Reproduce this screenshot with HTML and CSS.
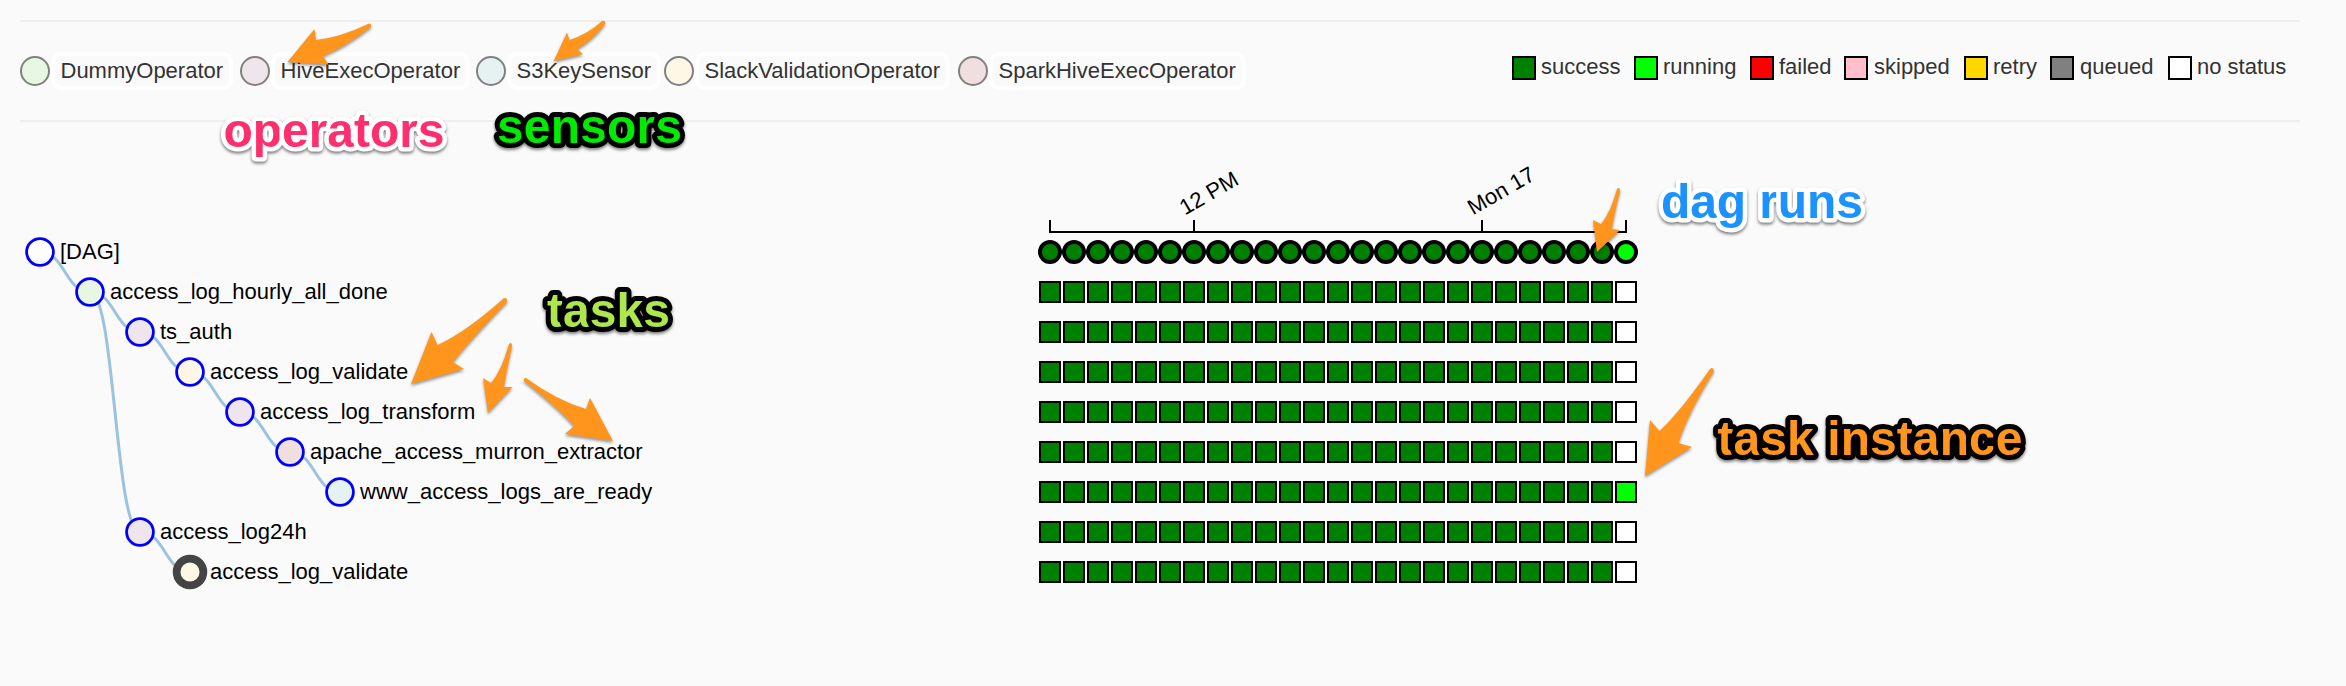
FILE: index.html
```html
<!DOCTYPE html>
<html lang="en">
<head>
<meta charset="utf-8">
<title>DAG tree view</title>
<link rel="stylesheet" href="styles.css">
</head>
<body>
<header class="legend">
  <ul class="operators">
    <li><i class="dot dummy"></i><span>DummyOperator</span></li>
    <li><i class="dot hive"></i><span>HiveExecOperator</span></li>
    <li><i class="dot s3"></i><span>S3KeySensor</span></li>
    <li><i class="dot slack"></i><span>SlackValidationOperator</span></li>
    <li><i class="dot spark"></i><span>SparkHiveExecOperator</span></li>
  </ul>
  <ul class="states">
    <li><i class="box success"></i>success</li>
    <li><i class="box running"></i>running</li>
    <li><i class="box failed"></i>failed</li>
    <li><i class="box skipped"></i>skipped</li>
    <li><i class="box retry"></i>retry</li>
    <li><i class="box queued"></i>queued</li>
    <li><i class="box none"></i>no status</li>
  </ul>
</header>
<svg class="tree" width="2346" height="564" viewBox="0 122 2346 564">
  <g id="links" class="links"></g>
  <g id="nodes" class="nodes"></g>
  <path class="axis" d="M1050 220V232H1626V220M1194 220V232M1482 220V232"/>
  <text class="tick" transform="translate(1185 215.500) rotate(-30)">12 PM</text>
  <text class="tick" transform="translate(1473 215.500) rotate(-30)">Mon 17</text>
  <g id="runs"></g>
</svg>
<svg class="notes" width="2346" height="686" viewBox="0 0 2346 686">
  <g class="arrows">
    <path d="M287.500 62L314.500 29L316 40Q341 37 368 24Q372 23 371 27Q345 47 323 56L328.500 64.500Z"/>
    <path d="M553.700 61L567 32.500L569.500 40Q588 34 602 21Q606 20 605 24Q593 40 577 49L583 54Z"/>
    <path d="M411 384L431.500 332L437.500 345Q466 332 504 298Q508 298 507 302Q474 336 453 362L464 369Z"/>
    <path d="M488 413L483 378L491 383Q502 370 509 344Q512 341 512 346Q506 374 504 387L512.500 387Z"/>
    <path d="M613 441L590 398L586 409Q556 400 526 378Q523 378 524 381Q558 408 574 426L565 434Z"/>
    <path d="M1597 252L1593 220L1601 224Q1611 212 1617 189Q1620 186 1620 191Q1614 215 1612 229L1620 230Z"/>
    <path d="M1645 476L1650 420L1659.500 431Q1680 412 1710 369Q1713 366 1714 371Q1688 413 1678.500 443L1692 447Z"/>
  </g>
  <text class="note light operators-note" x="223.500" y="147" textLength="221">operators</text>
  <text class="note dark sensors-note" x="497" y="142.500" textLength="185">sensors</text>
  <text class="note dark tasks-note" x="547" y="327" textLength="123">tasks</text>
  <text class="note light runs-note" x="1661" y="218" textLength="202">dag runs</text>
  <text class="note dark instance-note" x="1717.500" y="454.500" textLength="305">task instance</text>
</svg>
<script src="tree.js"></script>
</body>
</html>
```

FILE: styles.css
```css
body {
  margin: 0;
  width: 2346px;
  height: 686px;
  overflow: hidden;
  position: relative;
  background: #fafafa;
  color: #333;
  font: 22px "Liberation Sans", Arial, sans-serif;
}
ul { display: grid; list-style: none; margin: 0; padding: 0; }
li { display: flex; white-space: nowrap; }
.legend {
  box-sizing: border-box;
  display: flex;
  justify-content: space-between;
  align-items: flex-start;
  margin: 20px 46px 0 20px;
  height: 102px;
  padding: 30px 10px 0 0;
  border-top: 2px solid #eee;
  border-bottom: 2px solid #eee;
}
.operators { grid-template-columns: 220px 236px 188px 294px auto; }
.operators li { align-items: center; }
.operators span {
  border: 4px solid #fff;
  border-radius: 10px;
  padding: 0 6px;
  height: 30px;
  line-height: 30px;
}
.dot {
  box-sizing: border-box;
  width: 30px;
  height: 30px;
  margin-right: 0.5px;
  border: 2px solid #808080;
  border-radius: 50%;
}
.dummy { background: #e8f7e4; }
.hive { background: #efe5ed; }
.s3 { background: #e6f1f2; }
.slack { background: #fff7e6; }
.spark { background: #f0dfdf; }
.states {
  grid-template-columns: 122px 116px 94px 120px 86px 118px 122px;
  padding-top: 3px;
  line-height: 24px;
}
.box {
  box-sizing: border-box;
  width: 24px;
  height: 24px;
  margin: 1px 5px 0 0;
  border: 2px solid #000;
}
.states .skipped, .states .queued { margin-right: 6px; }
.success { background: #008000; }
.running { background: #0f0; }
.failed { background: #f00; }
.skipped { background: pink; }
.retry { background: gold; }
.queued { background: gray; }
.none { background: #fff; }
.tree { display: block; }
.links { fill: none; stroke: #9bc3de; stroke-width: 3; }
.nodes { font-size: 22px; fill: #000; }
.nodes circle { stroke: #00f; stroke-width: 2.800; }
.nodes .selected { stroke: #444; stroke-width: 7.700; }
.axis { fill: none; stroke: #000; stroke-width: 2; }
.tick { fill: #000; font-size: 22px; }
.run { stroke: #000; stroke-width: 4; }
.task { stroke: #000; stroke-width: 2; }
.state-success { fill: #008000; }
.state-running { fill: #0f0; }
.state-none { fill: #fff; }
.notes { position: absolute; left: 0; top: 0; pointer-events: none; }
.arrows { fill: #ff951c; filter: drop-shadow(0 2px 1.500px rgba(0, 0, 0, 0.4)); }
.note {
  font-size: 48px;
  font-weight: bold;
  paint-order: stroke;
  stroke-width: 9px;
  stroke-linejoin: round;
  filter: drop-shadow(0 2px 1.500px rgba(0, 0, 0, 0.5));
}
.light { stroke: #fff; }
.dark { stroke: #000; stroke-width: 10px; }
.operators-note { fill: #ff2f6d; }
.sensors-note { fill: #00eb00; }
.tasks-note { fill: #aee64e; }
.runs-note { fill: #1c92ff; }
.instance-note { fill: #ff951c; }
```

FILE: tree.js
```js
const tasks = [
  ['[DAG]', 0, -1, '#fff'],
  ['access_log_hourly_all_done', 1, 0, '#e8f7e4'],
  ['ts_auth', 2, 1, '#efe5ed'],
  ['access_log_validate', 3, 2, '#fff7e6'],
  ['access_log_transform', 4, 3, '#efe5ed'],
  ['apache_access_murron_extractor', 5, 4, '#f0dfdf'],
  ['www_access_logs_are_ready', 6, 5, '#e6f1f2'],
  ['access_log24h', 2, 1, '#efe5ed'],
  ['access_log_validate', 3, 7, '#fff7e6']
];
const RUNS = 25;
const px = i => 40 + tasks[i][1] * 50;
const py = i => 252 + i * 40;
let links = '', nodes = '', runs = '';

tasks.forEach(([name, , parent, color], i) => {
  const x = px(i), y = py(i);
  if (parent >= 0) {
    const x0 = px(parent), y0 = py(parent), mid = (x + x0) / 2;
    links += `<path d="M${x0} ${y0}C${mid} ${y0} ${mid} ${y} ${x} ${y}"/>`;
  }
  const selected = i === 8 ? ' class="selected"' : '';
  nodes += `<circle${selected} cx="${x}" cy="${y}" r="13.4" fill="${color}"/>`;
  nodes += `<text x="${x + 20}" y="${y + 7}">${name}</text>`;
  for (let r = 0; r < RUNS; r++) {
    const last = r === RUNS - 1;
    const state = !last ? 'success' : (i === 0 || i === 6 ? 'running' : 'none');
    const cx = 1050 + r * 24;
    runs += i === 0
      ? `<circle class="run state-${state}" cx="${cx}" cy="${y}" r="10"/>`
      : `<rect class="task state-${state}" x="${cx - 10}" y="${y - 10}" width="20" height="20"/>`;
  }
});

document.getElementById('links').innerHTML = links;
document.getElementById('nodes').innerHTML = nodes;
document.getElementById('runs').innerHTML = runs;
```
